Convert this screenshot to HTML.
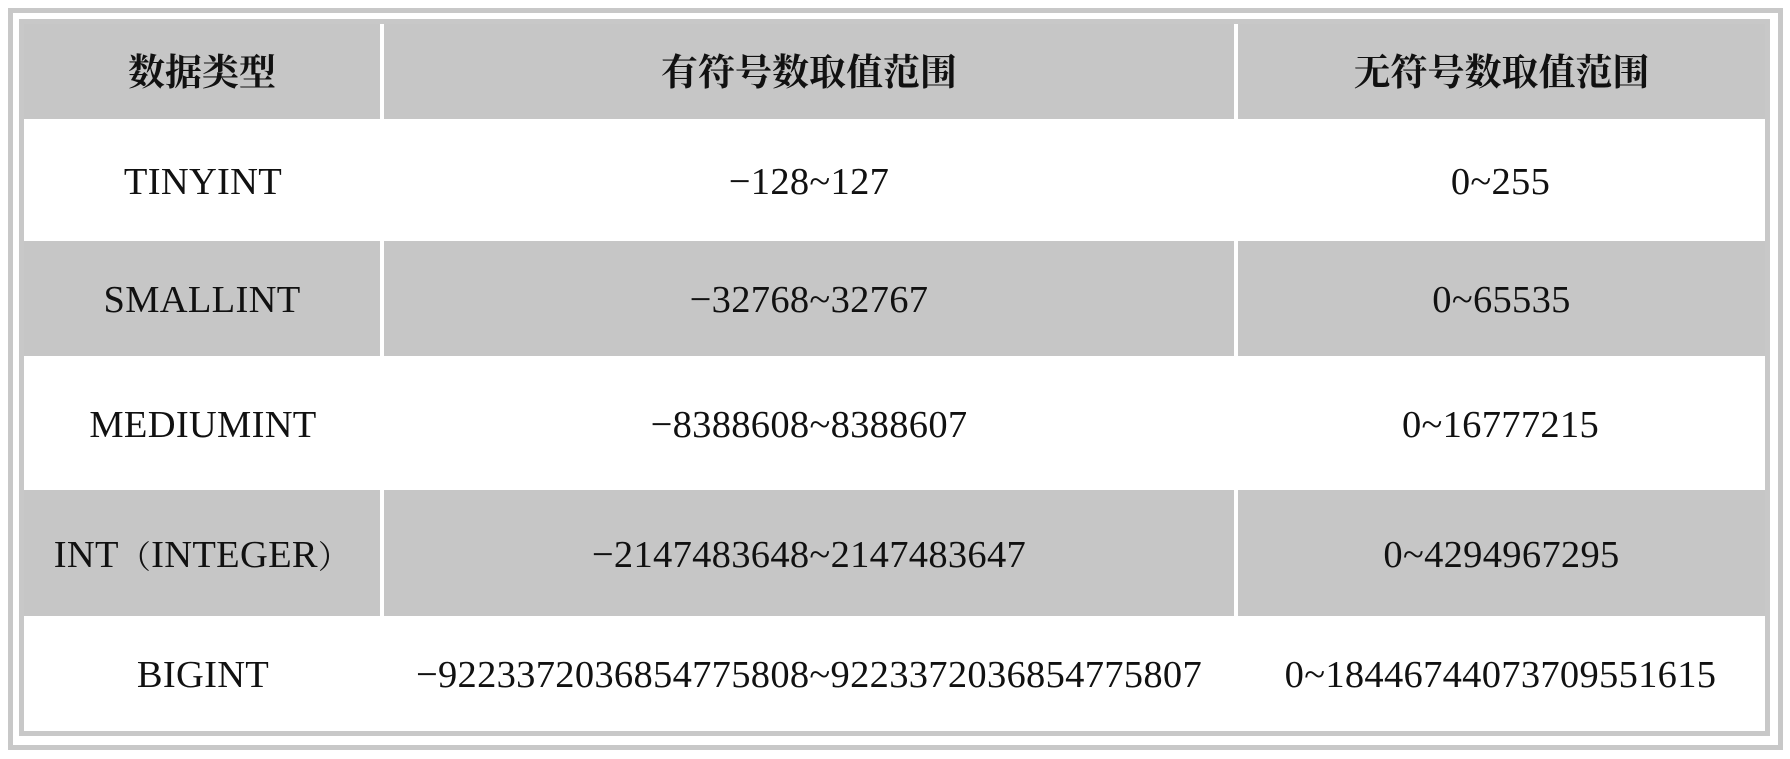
<!DOCTYPE html>
<html><head><meta charset="utf-8"><style>
body{margin:0;width:1790px;height:759px;background:#fff;position:relative;overflow:hidden;font-family:"Liberation Serif","Noto Serif CJK SC",serif;color:#111}
.o{position:absolute;left:8px;top:8px;width:1765px;height:732px;border:5px solid #c8c8c8}
.i{position:absolute;left:19px;top:19px;width:1741px;height:707px;border:5px solid #c8c8c8;background:#fff}
.c{position:absolute;display:flex;align-items:center;justify-content:center;font-size:38.5px;letter-spacing:0.3px;white-space:nowrap;padding-top:3px;box-sizing:border-box}
.g{background:#c6c6c6}.w{background:#fff}
.h{font-family:"Noto Serif CJK SC","Noto Sans CJK SC",serif;font-weight:bold;font-size:37px;letter-spacing:0;padding-top:0;padding-bottom:6px}
.p{font-size:32px}
</style></head><body>
<div class="o"></div><div class="i"></div>
<div class="c g h" style="left:24px;top:24px;width:356px;height:95px">数据类型</div>
<div class="c g h" style="left:384px;top:24px;width:850px;height:95px">有符号数取值范围</div>
<div class="c g h" style="left:1238px;top:24px;width:527px;height:95px">无符号数取值范围</div>
<div class="c w" style="left:24px;top:119px;width:358px;height:122px">TINYINT</div>
<div class="c w" style="left:382px;top:119px;width:854px;height:122px">−128~127</div>
<div class="c w" style="left:1236px;top:119px;width:529px;height:122px">0~255</div>
<div class="c g" style="left:24px;top:241px;width:356px;height:115px">SMALLINT</div>
<div class="c g" style="left:384px;top:241px;width:850px;height:115px">−32768~32767</div>
<div class="c g" style="left:1238px;top:241px;width:527px;height:115px">0~65535</div>
<div class="c w" style="left:24px;top:356px;width:358px;height:134px">MEDIUMINT</div>
<div class="c w" style="left:382px;top:356px;width:854px;height:134px">−8388608~8388607</div>
<div class="c w" style="left:1236px;top:356px;width:529px;height:134px">0~16777215</div>
<div class="c g" style="left:24px;top:490px;width:356px;height:126px">INT<span class="p">（</span>INTEGER<span class="p">）</span></div>
<div class="c g" style="left:384px;top:490px;width:850px;height:126px">−2147483648~2147483647</div>
<div class="c g" style="left:1238px;top:490px;width:527px;height:126px">0~4294967295</div>
<div class="c w" style="left:24px;top:616px;width:358px;height:115px">BIGINT</div>
<div class="c w" style="left:382px;top:616px;width:854px;height:115px">−9223372036854775808~9223372036854775807</div>
<div class="c w" style="left:1236px;top:616px;width:529px;height:115px">0~18446744073709551615</div>
</body></html>
